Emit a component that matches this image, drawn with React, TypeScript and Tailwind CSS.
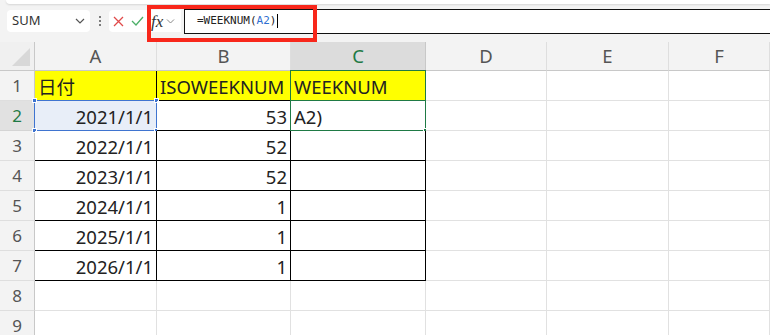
import React from "react";

const cols = ["A", "B", "C", "D", "E", "F"];

const rows: string[][] = [
  ["日付", "ISOWEEKNUM", "WEEKNUM"],
  ["2021/1/1", "53", "A2)"],
  ["2022/1/1", "52", ""],
  ["2023/1/1", "52", ""],
  ["2024/1/1", "1", ""],
  ["2025/1/1", "1", ""],
  ["2026/1/1", "1", ""],
  ["", "", ""],
  ["", "", ""],
];

const Handle = ({ pos, color }: { pos: string; color: string }) => (
  <div className={`absolute w-[5px] h-[5px] border border-white ${color} ${pos}`} />
);

const FormulaBar = () => (
  <div className="relative h-[42px] bg-[#f3f3f3] flex items-center">
    {/* ribbon bottom edge */}
    <div className="absolute left-[6px] right-0 top-0 h-[4px] bg-white rounded-bl-md shadow-[0_1px_2px_rgba(0,0,0,0.12)]" />

    <div className="ml-[7px] w-[83px] h-[22px] bg-white rounded-[4px] flex items-center justify-between pl-[5px] pr-[5px] text-[13px] text-[#333] font-['Noto_Sans',sans-serif]">
      <span>SUM</span>
      <svg width="10" height="6" viewBox="0 0 10 6" fill="none" stroke="#555" strokeWidth="1.2">
        <path d="M1 1l4 4 4-4" />
      </svg>
    </div>

    <div className="w-[19px] flex flex-col items-center gap-[2px]">
      <span className="w-[2px] h-[2px] bg-[#555] rounded-full" />
      <span className="w-[2px] h-[2px] bg-[#555] rounded-full" />
      <span className="w-[2px] h-[2px] bg-[#555] rounded-full" />
    </div>

    <div className="w-[72px] h-[22px] bg-white rounded-l-[4px] flex items-center">
      <svg className="ml-[4px]" width="11" height="11" viewBox="0 0 11 11" stroke="#e04a4a" strokeWidth="1.3">
        <path d="M1 1l9 9M10 1l-9 9" />
      </svg>
      <svg className="ml-[7px]" width="13" height="10" viewBox="0 0 13 10" fill="none" stroke="#4caf68" strokeWidth="1.3">
        <path d="M1 5l4 4 7-8" />
      </svg>
      <span className="ml-[7px] font-['Liberation_Serif',serif] italic text-[17px] leading-none text-[#333]">fx</span>
      <svg className="ml-[3px]" width="9" height="5" viewBox="0 0 9 5" fill="none" stroke="#888" strokeWidth="1">
        <path d="M1 0.5l3.5 3.5 3.5-3.5" />
      </svg>
    </div>

    <div className="ml-[3px] flex-1 h-[25px] bg-white border-y border-l border-[#111] flex items-center pl-[12px] font-['DejaVu_Sans_Mono',monospace] text-[11px] text-[#222]">
      <span>=WEEKNUM(</span>
      <span className="text-[#2f6fd0]">A2</span>
      <span>)</span>
      <span className="ml-[1px] w-px h-[14px] bg-black" />
    </div>

    {/* highlight frame */}
    <div className="absolute left-[147px] top-[5px] w-[170px] h-[37px] border-[4px] border-[#f8271b]" />
  </div>
);

export default function App() {
  return (
    <div className="w-[770px] h-[335px] overflow-hidden bg-white">
      <FormulaBar />
      <div className="grid grid-cols-[35px_122px_134px_135px_121px_122px_1fr] grid-rows-[29px_repeat(9,30px)] font-['Noto_Sans','Noto_Sans_CJK_JP',sans-serif] text-[18.5px] leading-none">
        {/* header row */}
        <div className="relative bg-[#f0f0f0] border-r border-b border-[#c8c8c8]">
          <div className="absolute right-[4px] bottom-[4px] w-0 h-0 border-l-[18px] border-l-transparent border-b-[18px] border-b-[#d8d8d8]" />
        </div>
        {cols.map((c) => (
          <div
            key={c}
            className={`flex items-center justify-center border-b border-r ${
              c === "C"
                ? "bg-[#dcdcdc] text-[#1f7a45] border-b-[#b8b8b8] border-r-[#c8c8c8]"
                : "bg-[#f3f3f3] text-[#555] border-[#c8c8c8] border-r-[#dedede]"
            }`}
          >
            {c}
          </div>
        ))}

        {rows.map((r, ri) => {
          const rowNo = ri + 1;
          return (
            <React.Fragment key={ri}>
              <div
                className={`flex items-center justify-center border-b border-r text-[17px] ${
                  rowNo === 2
                    ? "bg-[#e1e1e1] text-[#1f7a45] border-b-[#d4d4d4] border-r-[#1f7a45]"
                    : "bg-[#f3f3f3] text-[#555] border-b-[#dedede] border-r-[#c8c8c8]"
                }`}
              >
                {rowNo}
              </div>
              {cols.map((c, ci) => {
                const inTable = ci < 3 && rowNo <= 7;
                const value = ci < 3 ? r[ci] : "";
                const isNum = rowNo > 1 && ci < 2;
                const yellow = rowNo === 1 && ci < 3;
                const isA2 = rowNo === 2 && ci === 0;
                const isC1 = rowNo === 1 && ci === 2;
                const isC2 = rowNo === 2 && ci === 2;
                return (
                  <div
                    key={c}
                    className={`relative flex items-end pb-[4px] border-r border-b text-[#222] ${
                      inTable ? "border-black" : "border-[#e1e1e1]"
                    } ${yellow ? "bg-[#ffff00]" : isA2 ? "bg-[#e8eef8]" : "bg-white"} ${
                      isNum ? "justify-end pr-[3px]" : "justify-start pl-[3px]"
                    }`}
                  >
                    {value}
                    {isA2 && (
                      <div className="absolute -inset-px border border-[#3f74d0]">
                        <Handle pos="-left-[3px] -top-[3px]" color="bg-[#3f74d0]" />
                        <Handle pos="-right-[3px] -top-[3px]" color="bg-[#3f74d0]" />
                        <Handle pos="-left-[3px] -bottom-[3px]" color="bg-[#3f74d0]" />
                        <Handle pos="-right-[3px] -bottom-[3px]" color="bg-[#3f74d0]" />
                      </div>
                    )}
                    {isC1 && <div className="absolute -inset-px border-[1.5px] border-[#1f7a45]" />}
                    {isC2 && (
                      <div className="absolute -inset-px border-[1.5px] border-[#1f7a45]">
                        <Handle pos="-right-[3px] -bottom-[3px]" color="bg-[#1f7a45]" />
                      </div>
                    )}
                  </div>
                );
              })}
            </React.Fragment>
          );
        })}
      </div>
    </div>
  );
}
